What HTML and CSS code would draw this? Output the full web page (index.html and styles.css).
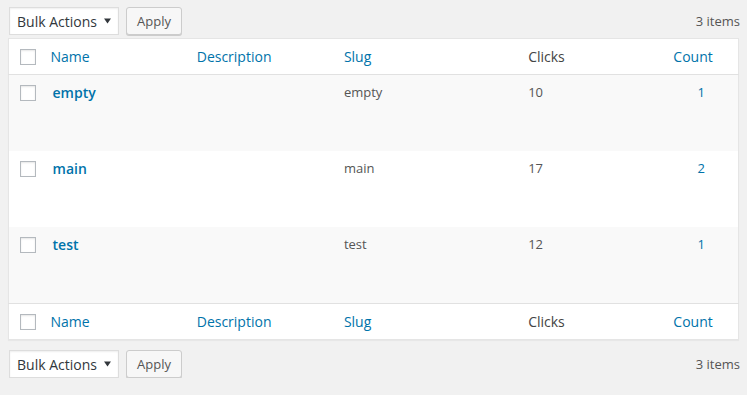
FILE: index.html
```html
<!DOCTYPE html>
<html lang="en">
<head>
    <meta charset="UTF-8">
    <title>Groups</title>
    <link rel="stylesheet" href="styles.css">
</head>
<body>
    <div class="wrap">
        <!-- Top navigation -->
        <div class="tablenav top">
            <div class="actions">
                <div class="bulk-select">
                    <span>Bulk Actions</span>
                    <svg width="7" height="6" viewBox="0 0 7 6"><path d="M0 0.5h7L3.5 5.5z" fill="#32373c"/></svg>
                </div>
                <button class="button">Apply</button>
            </div>
            <div class="displaying-num">3 items</div>
        </div>

        <table class="list-table">
            <colgroup>
                <col class="col-check">
                <col class="col-name">
                <col class="col-desc">
                <col class="col-slug">
                <col class="col-clicks">
                <col class="col-count">
            </colgroup>
            <thead>
                <tr>
                    <td class="check-column"><span class="checkbox"></span></td>
                    <th class="sortable">Name</th>
                    <th class="sortable">Description</th>
                    <th class="sortable">Slug</th>
                    <th>Clicks</th>
                    <th class="sortable column-count">Count</th>
                </tr>
            </thead>
            <tbody>
                <tr>
                    <th class="check-column"><span class="checkbox"></span></th>
                    <td><a class="row-title" href="#">empty</a></td>
                    <td></td>
                    <td>empty</td>
                    <td>10</td>
                    <td class="column-count"><a href="#">1</a></td>
                </tr>
                <tr>
                    <th class="check-column"><span class="checkbox"></span></th>
                    <td><a class="row-title" href="#">main</a></td>
                    <td></td>
                    <td>main</td>
                    <td>17</td>
                    <td class="column-count"><a href="#">2</a></td>
                </tr>
                <tr>
                    <th class="check-column"><span class="checkbox"></span></th>
                    <td><a class="row-title" href="#">test</a></td>
                    <td></td>
                    <td>test</td>
                    <td>12</td>
                    <td class="column-count"><a href="#">1</a></td>
                </tr>
            </tbody>
            <tfoot>
                <tr>
                    <td class="check-column"><span class="checkbox"></span></td>
                    <th class="sortable">Name</th>
                    <th class="sortable">Description</th>
                    <th class="sortable">Slug</th>
                    <th>Clicks</th>
                    <th class="sortable column-count">Count</th>
                </tr>
            </tfoot>
        </table>

        <!-- Bottom navigation -->
        <div class="tablenav bottom">
            <div class="actions">
                <div class="bulk-select">
                    <span>Bulk Actions</span>
                    <svg width="7" height="6" viewBox="0 0 7 6"><path d="M0 0.5h7L3.5 5.5z" fill="#32373c"/></svg>
                </div>
                <button class="button">Apply</button>
            </div>
            <div class="displaying-num">3 items</div>
        </div>
    </div>
</body>
</html>
```

FILE: styles.css
```css
/* General */
body {
    margin: 0;
    background: #f1f1f1;
    color: #444;
    font-family: "Open Sans", sans-serif;
    font-size: 13px;
}

a {
    color: #0073aa;
    text-decoration: none;
}

.wrap {
    margin: 0 8px;
}

/* Table navigation */
.tablenav {
    display: flex;
    justify-content: space-between;
    align-items: center;
    height: 28px;
}

.tablenav.top {
    padding-top: 7px;
    margin-bottom: 3px;
}

.tablenav.bottom {
    margin-top: 10px;
}

.actions {
    display: flex;
    gap: 7px;
    margin-left: 1px;
}

.bulk-select {
    box-sizing: border-box;
    width: 110px;
    height: 28px;
    padding: 0 7px 0 7px;
    display: flex;
    align-items: center;
    justify-content: space-between;
    background: #fff;
    border: 1px solid #ddd;
    box-shadow: inset 0 1px 2px rgba(0, 0, 0, 0.07);
    color: #32373c;
    font-size: 14px;
}

.button {
    box-sizing: border-box;
    height: 28px;
    padding: 0 10px 1px;
    font-family: "Open Sans", sans-serif;
    font-size: 13px;
    color: #555;
    background: #f7f7f7;
    border: 1px solid #ccc;
    border-radius: 3px;
    box-shadow: 0 1px 0 #ccc;
    cursor: pointer;
}

.displaying-num {
    color: #555;
    margin-right: -1px;
}

/* List table */
.list-table {
    width: 100%;
    table-layout: fixed;
    border-collapse: collapse;
    border: 1px solid #e5e5e5;
    background: #fff;
    box-shadow: 0 1px 1px rgba(0, 0, 0, 0.04);
}

.col-check { width: 32px; }
.col-name { width: 146px; }
.col-desc { width: 147px; }
.col-slug { width: 184px; }
.col-clicks { width: 146px; }
.col-count { width: 74px; }

.list-table thead tr {
    border-bottom: 1px solid #e1e1e1;
}

.list-table tfoot tr {
    border-top: 1px solid #e1e1e1;
}

.list-table thead th,
.list-table tfoot th {
    height: 19px;
    padding: 8px 10px;
    text-align: left;
    font-weight: normal;
    font-size: 14px;
    line-height: 19px;
    color: #444;
}

.list-table tfoot th {
    height: 18px;
}

.list-table th.sortable {
    color: #0073aa;
}

.list-table thead th.column-count,
.list-table tfoot th.column-count {
    padding-left: 9px;
}

.list-table thead .check-column,
.list-table tfoot .check-column {
    padding: 0 0 0 11px;
    vertical-align: middle;
}

.list-table tbody tr:nth-child(odd) {
    background: #f9f9f9;
}

.list-table tbody td {
    height: 60px;
    padding: 8px 10px;
    vertical-align: top;
    line-height: 19.5px;
    color: #555;
}

.list-table tbody th.check-column {
    padding: 10px 0 0 11px;
    vertical-align: top;
}

.list-table td.column-count {
    text-align: center;
}

.checkbox {
    display: block;
    box-sizing: border-box;
    width: 16px;
    height: 16px;
    background: #fff;
    border: 1px solid #b4b9be;
    box-shadow: inset 0 1px 2px rgba(0, 0, 0, 0.1);
}

.row-title {
    display: inline-block;
    margin-left: 2px;
    font-size: 14px;
    font-weight: 600;
}
```
